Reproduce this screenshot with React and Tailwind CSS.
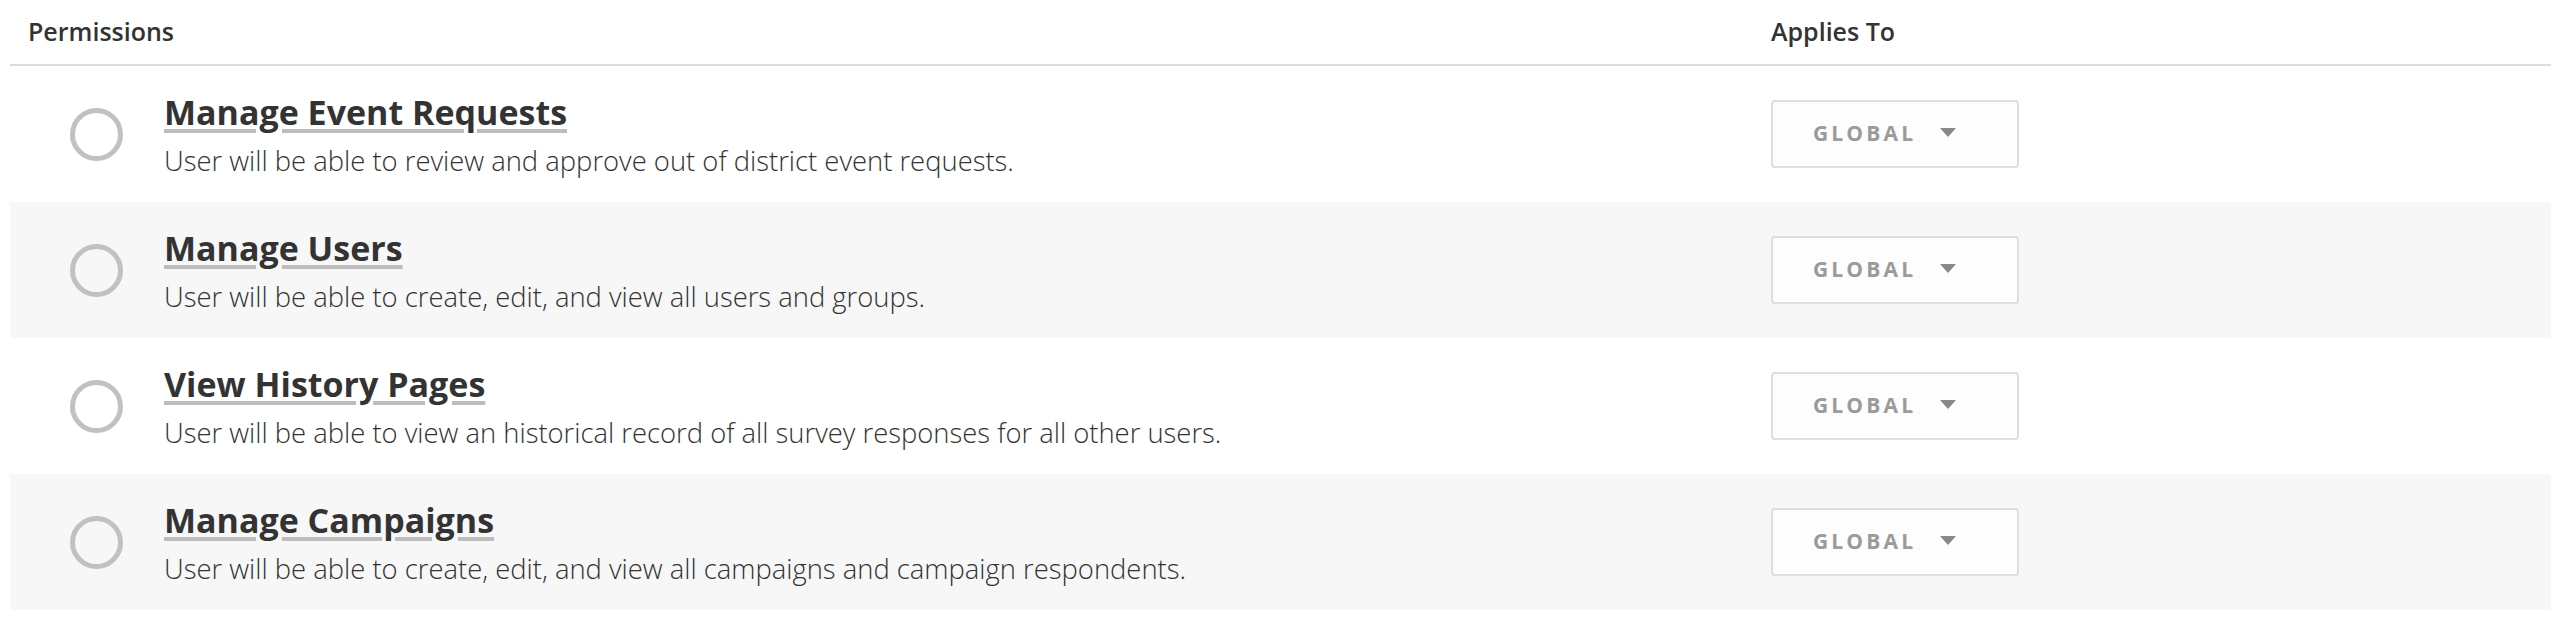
const permissions = [
  {
    title: "Manage Event Requests",
    description: "User will be able to review and approve out of district event requests.",
  },
  {
    title: "Manage Users",
    description: "User will be able to create, edit, and view all users and groups.",
  },
  {
    title: "View History Pages",
    description: "User will be able to view an historical record of all survey responses for all other users.",
  },
  {
    title: "Manage Campaigns",
    description: "User will be able to create, edit, and view all campaigns and campaign respondents.",
  },
];

function ScopeSelect() {
  return (
    <button
      type="button"
      className="flex h-[68px] w-[248px] items-center gap-[24px] rounded-[4px] border-2 border-[#dedede] bg-[#fdfdfd] pl-[40px] text-[21px] font-bold tracking-[0.15em] text-[#9a9a9a]"
    >
      GLOBAL
      <svg width="16" height="9" viewBox="0 0 16 9" className="mb-[3px]">
        <path d="M0 0h16L8 9z" fill="#888" />
      </svg>
    </button>
  );
}

function PermissionRow({ title, description, striped }) {
  return (
    <div className={`flex h-[136px] items-center ${striped ? "bg-[#f7f7f7]" : "bg-white"}`}>
      <div className="flex w-[1761px] items-center">
        <span className="ml-[60px] h-[53px] w-[53px] shrink-0 rounded-full border-[5px] border-[#c1c1c1]" />
        <div className="ml-[41px] flex flex-col pt-[1px]">
          <h3 className="text-[34px] leading-[42px] font-bold text-[#333] underline decoration-[#bdbdbd] decoration-[4px] underline-offset-[4px]">
            {title}
          </h3>
          <p className="mt-[11px] text-[27.4px] leading-[34px] font-light text-[#333]">{description}</p>
        </div>
      </div>
      <ScopeSelect />
    </div>
  );
}

export default function App() {
  return (
    <div className="ml-[10px] mr-[15px] bg-white font-['Open_Sans',sans-serif]">
      <div className="flex h-[66px] items-center border-b-2 border-[#dddddd] text-[25px] font-semibold text-[#333]">
        <div className="w-[1761px] pl-[18px]">Permissions</div>
        <div>Applies To</div>
      </div>
      {permissions.map((p, i) => (
        <PermissionRow key={p.title} {...p} striped={i % 2 === 1} />
      ))}
    </div>
  );
}
